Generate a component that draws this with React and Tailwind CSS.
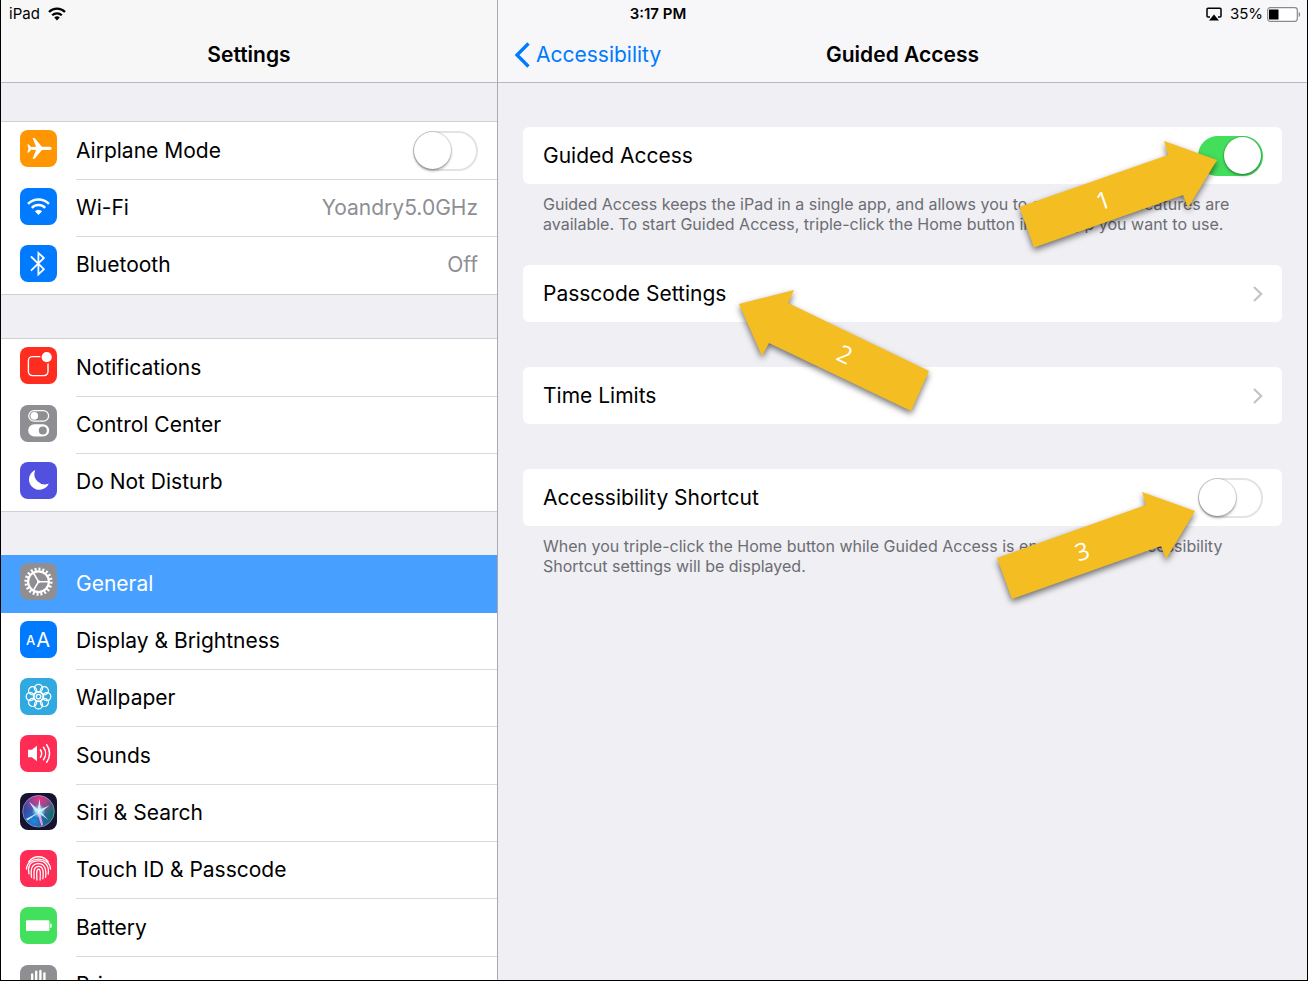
import React from "react";

function Tile({ className, children }) {
  return (
    <svg viewBox="0 0 37 37" aria-hidden="true" className={`mt-2 size-[37px] shrink-0 self-start rounded-lg ${className}`}>
      {children}
    </svg>
  );
}

const line = { fill: "none", stroke: "#fff", strokeLinecap: "round", strokeLinejoin: "round" };

const icons = {
  airplane: (
    <Tile className="bg-[#ff9500]">
      <path
        fill="#fff"
        d="M31.7 18.4c0-1-1.3-1.7-3.2-1.7h-6.6L14.6 8h-2l3.5 8.8-5 .2-2.3-2.6H7.3l1.2 4-1.2 4h1.500l2.3-2.6 5 .2-3.500 8.8h2l7.3-8.7h6.6c1.9 0 3.2-.7 3.2-1.7z"
      />
    </Tile>
  ),
  wifi: (
    <Tile className="bg-[#007aff]">
      <g {...line} strokeLinecap="butt" strokeWidth="2.4">
        <path d="M8 15.8a14.8 14.8 0 0 1 21 0" />
        <path d="M11.8 19.8a9.5 9.5 0 0 1 13.4 0" />
      </g>
      <path fill="#fff" d="M14.9 23.3a5 5 0 0 1 7.2 0l-3.6 3.7z" />
    </Tile>
  ),
  bluetooth: (
    <Tile className="bg-[#007aff]">
      <path {...line} strokeLinejoin="miter" strokeWidth="1.8" d="M11.5 12l12.4 12.2-5.5 5.2V8l5.5 5-12.4 12.2" />
    </Tile>
  ),
  notifications: (
    <Tile className="bg-[#ff2d20]">
      <rect {...line} x="8.4" y="9.6" width="19.6" height="19" rx="4" strokeWidth="1.4" />
      <circle cx="26.7" cy="10.2" r="5.8" fill="#fff" stroke="#ff2d20" strokeWidth="1.4" />
    </Tile>
  ),
  control: (
    <Tile className="bg-[#8e8e93]">
      <rect {...line} x="8.8" y="5.6" width="19.8" height="10.6" rx="5.3" strokeWidth="1.3" />
      <circle cx="14.3" cy="10.9" r="3.8" fill="#fff" />
      <rect x="8.2" y="19.2" width="21" height="12.4" rx="6.2" fill="#fff" />
      <circle cx="22.8" cy="25.4" r="4" fill="#8e8e93" />
    </Tile>
  ),
  moon: (
    <Tile className="bg-[#5150df]">
      <path fill="#fff" d="M15.3 8A10.3 10.3 0 1 0 28.8 21.4 10.2 10.2 0 0 1 15.3 8z" />
    </Tile>
  ),
  gear: (
    <Tile className="bg-[#8e8e93]">
      <g fill="none" stroke="#fff">
        <circle cx="18.5" cy="18.7" r="12.6" strokeWidth="3" pathLength="40" strokeDasharray="1 1" />
        <circle cx="18.5" cy="18.7" r="10.4" strokeWidth="2.2" />
        <path strokeWidth="1.6" d="M18.5 18.7h10.2M18.5 18.7l-5.2-9M18.5 18.7l-5.2 9" />
      </g>
      <circle cx="18.5" cy="18.7" r="1.6" fill="#fff" />
    </Tile>
  ),
  display: (
    <Tile className="bg-[#007aff]">
      <g fill="#fff" fontFamily="Inter, sans-serif">
        <text x="6" y="24" fontSize="13" fontWeight="500">A</text>
        <text x="16.2" y="25.6" fontSize="20">A</text>
      </g>
    </Tile>
  ),
  wallpaper: (
    <Tile className="bg-[#2fa9e0]">
      <g {...line} strokeWidth="1.3">
        {[0, 45, 90, 135, 180, 225, 270, 315].map((a) => (
          <circle key={a} cx="18.5" cy="10.3" r="4" transform={`rotate(${a} 18.5 18.6)`} />
        ))}
        <circle cx="18.5" cy="18.6" r="5" />
        <circle cx="18.5" cy="18.6" r="2.2" />
      </g>
    </Tile>
  ),
  sounds: (
    <Tile className="bg-[#ff2d55]">
      <path fill="#fff" d="M8 14.8h3.8l5.2-4v15.4l-5.2-4H8z" />
      <g {...line} strokeWidth="1.5">
        <path d="M20.4 14.8a6.5 6.5 0 0 1 0 7.4" />
        <path d="M23.5 12.3a10.5 10.5 0 0 1 0 12.4" />
        <path d="M26.7 9.7a15 15 0 0 1 0 17.6" />
      </g>
    </Tile>
  ),
  siri: (
    <Tile className="bg-[#15132f]">
      <defs>
        <linearGradient id="siri-base" x1="0" y1="0.4" x2="1" y2="0.6">
          <stop offset="0" stopColor="#3c3f9e" />
          <stop offset="0.45" stopColor="#3d6fc4" />
          <stop offset="1" stopColor="#0c6a62" />
        </linearGradient>
        <radialGradient id="siri-pink" cx="0.55" cy="0.1" r="0.55">
          <stop offset="0" stopColor="#e8307c" />
          <stop offset="1" stopColor="#e8307c" stopOpacity="0" />
        </radialGradient>
        <radialGradient id="siri-blue" cx="0.35" cy="0.8" r="0.5">
          <stop offset="0" stopColor="#1b8fe0" />
          <stop offset="1" stopColor="#1b3fa0" stopOpacity="0" />
        </radialGradient>
        <radialGradient id="siri-glow">
          <stop offset="0" stopColor="#fff" />
          <stop offset="0.35" stopColor="#bff4ff" stopOpacity="0.8" />
          <stop offset="1" stopColor="#9ff" stopOpacity="0" />
        </radialGradient>
      </defs>
      <circle cx="18.5" cy="18.3" r="15.8" fill="url(#siri-base)" />
      <circle cx="18.5" cy="18.3" r="15.8" fill="url(#siri-pink)" />
      <circle cx="18.5" cy="18.3" r="15.8" fill="url(#siri-blue)" />
      <circle cx="18.5" cy="18.3" r="15.8" fill="none" stroke="#a8a6c8" strokeOpacity="0.75" strokeWidth="0.9" />
      <path
        fill="#d8fbff"
        fillOpacity="0.9"
        d="M20 18.5L6 26l1.6 1.6zM18.5 17L9 8.500l6.500 10.500zM17.500 18l2-12.500 1.500 12.500zM18.500 17l11-4.500-9.500 7.500zM18 19.500l10.500 7.500-8.500-9z"
      />
      <path fill="#f29bd8" d="M17 19l4.500 14 1.500-1.500-3-12.500z" />
      <circle cx="18.8" cy="18.3" r="7" fill="url(#siri-glow)" />
    </Tile>
  ),
  touch: (
    <Tile className="bg-[#ff2d55]">
      <g {...line} strokeWidth="1.3">
        <path d="M8.8 11.6c5-6.500 14.400-6.500 19.400 0" />
        <path d="M6.500 19c.9-13.200 23.100-13.200 24 0" />
        <path d="M9 23.800c-1.400-5.600-.4-12.900 9.500-12.900 7.300 0 11 5.500 9.700 13.300" />
        <path d="M11.500 27.300c-.7-6.800-.8-13.700 7-13.700 6.500 0 8 5.900 7.100 13.700" />
        <path d="M14.100 28.800c-.1-6-1.100-12.500 4.400-12.500s4.900 6.500 4.400 12.500" />
        <path d="M16.900 30c0-4.500-.9-10.800 1.600-10.800s1.800 6.300 1.600 10.800" />
      </g>
    </Tile>
  ),
  battery: (
    <Tile className="bg-[#43e05e]">
      <rect x="6" y="13.3" width="23.4" height="10.6" rx="1" fill="#fff" />
      <path fill="#fff" d="M30.2 16.2c2.2.4 2.2 4.400 0 4.800z" />
    </Tile>
  ),
  privacy: (
    <Tile className="bg-[#8e8e93]">
      <path {...line} strokeWidth="2.4" d="M12.200 20V9.500M16.200 18V6.800M20.400 18V6M24.400 20V8.500" />
      <path fill="#fff" d="M11 16h14.600v9c0 3-2 6-6.600 6-4 0-5.500-2-8-6z" />
    </Tile>
  ),
};

function Switch({ label, on }) {
  return (
    <input
      type="checkbox"
      role="switch"
      aria-label={label}
      defaultChecked={on}
      className="flex h-10 w-[65px] shrink-0 appearance-none items-center rounded-full border-2 border-[#e3e3e5] bg-white before:-ml-px before:size-[37px] before:shrink-0 before:rounded-full before:bg-white before:shadow-[0_0_0_1px_rgba(0,0,0,0.12),0_2px_3px_rgba(0,0,0,0.3)] before:content-[''] checked:border-[#43df5c] checked:bg-[#43df5c] checked:before:ml-6"
    />
  );
}

function Row({ icon, label, value, toggle, active }) {
  const body = (
    <>
      {icons[icon]}
      <span
        className={`flex h-full flex-1 items-center justify-between border-b pr-[19px] ${
          active ? "border-transparent text-white" : "border-[#dadade] group-last/row:border-transparent"
        }`}
      >
        {label}
        {value && <span className="text-[#8e8e93]">{value}</span>}
        {toggle && <Switch label={label} />}
      </span>
    </>
  );
  const box = "flex h-full w-full items-center gap-[19px] pl-[19px] text-left";
  return (
    <li className={`group/row h-[57px] nth-[3n+1]:h-[58px] ${active ? "-mt-px bg-[#479fff]" : ""}`}>
      {toggle ? <div className={box}>{body}</div> : <button type="button" className={box}>{body}</button>}
    </li>
  );
}

const groups = [
  [
    { icon: "airplane", label: "Airplane Mode", toggle: true },
    { icon: "wifi", label: "Wi-Fi", value: "Yoandry5.0GHz" },
    { icon: "bluetooth", label: "Bluetooth", value: "Off" },
  ],
  [
    { icon: "notifications", label: "Notifications" },
    { icon: "control", label: "Control Center" },
    { icon: "moon", label: "Do Not Disturb" },
  ],
  [
    { icon: "gear", label: "General", active: true },
    { icon: "display", label: "Display & Brightness" },
    { icon: "wallpaper", label: "Wallpaper" },
    { icon: "sounds", label: "Sounds" },
    { icon: "siri", label: "Siri & Search" },
    { icon: "touch", label: "Touch ID & Passcode" },
    { icon: "battery", label: "Battery" },
    { icon: "privacy", label: "Privacy" },
  ],
];

function StatusBar() {
  return (
    <div className="z-10 col-start-1 row-start-1 grid h-7 grid-cols-[1fr_auto_1fr] items-center self-start pl-2 text-[15px]">
      <div className="flex items-center gap-2">
        iPad
        <svg viewBox="0 0 18 14" className="h-3.5 w-[18px]" aria-label="Wi-Fi">
          <g fill="none" stroke="#000" strokeWidth="2.3">
            <path d="M1 5a11.300 11.300 0 0 1 16 0" />
            <path d="M4.200 8.300a6.800 6.800 0 0 1 9.600 0" />
          </g>
          <path d="M6.200 10.600a4 4 0 0 1 5.600 0L9 13.500z" />
        </svg>
      </div>
      <div className="font-semibold">3:17 PM</div>
      <div className="flex items-center justify-end gap-1 pr-1.5">
        <svg viewBox="0 0 16 14" className="mr-1 h-3.5 w-4" aria-label="AirPlay">
          <path
            d="M4 10H2a1 1 0 0 1-1-1V2.300a1 1 0 0 1 1-1h12a1 1 0 0 1 1 1V9a1 1 0 0 1-1 1h-2"
            fill="none"
            stroke="#000"
            strokeWidth="1.5"
          />
          <path d="M8 7.500l5 6H3z" />
        </svg>
        35%
        <svg viewBox="0 0 34 15" className="h-[15px] w-[34px]" aria-label="Battery 35%">
          <rect x="0.7" y="0.7" width="29.6" height="13.6" rx="2.5" fill="#fff" stroke="#8a8a8d" strokeWidth="1.2" />
          <rect x="2" y="2.5" width="9.5" height="10" rx="0.5" />
          <path d="M31.700 5c1.900.5 1.900 4.500 0 5z" fill="#8a8a8d" />
        </svg>
      </div>
    </div>
  );
}

function Card({ label, children, link }) {
  const cls = "flex h-[57px] w-full items-center justify-between rounded-md bg-white pr-[19px] pl-5 text-left";
  if (!link) return <div className={cls}>{label}{children}</div>;
  return (
    <button type="button" className={cls}>
      {label}
      <svg viewBox="0 0 10 18" className="h-[18px] w-2.5" aria-hidden="true">
        <path d="M1 2l7.200 7L1 16" fill="none" stroke="#c2c2c7" strokeWidth="2.2" />
      </svg>
    </button>
  );
}

const arrows = [
  { n: 1, x: 1103, y: 200, turn: -19, d: "M1019.500 207L1034 247.500 1183 195 1188 208 1217 160 1164 141 1168 155z" },
  { n: 2, x: 845, y: 354, turn: 25, d: "M739 304L794 290 788 303 929 371 911 411 769 343 762 356z" },
  { n: 3, x: 1082, y: 551, turn: -19, d: "M997 558L1012 599 1161 546 1166 559 1195 511 1142 492 1146 505z" },
];

function Arrows() {
  return (
    <svg
      width="1308"
      height="981"
      viewBox="0 0 1308 981"
      className="pointer-events-none absolute top-0 -left-px z-20 max-w-none"
    >
      {arrows.map((a) => (
        <g key={a.n}>
          <path d={a.d} fill="#f4bd22" className="drop-shadow-[0_3px_3px_rgba(0,0,0,0.55)]" />
          <text
            x={a.x}
            y={a.y + 9}
            textAnchor="middle"
            transform={`rotate(${a.turn} ${a.x} ${a.y})`}
            fill="#fff"
            fontSize="24"
            fontFamily="'Open Sans', 'Noto Sans', sans-serif"
          >
            {a.n}
          </text>
        </g>
      ))}
    </svg>
  );
}

export default function App() {
  return (
    <div className="relative grid h-screen grid-cols-1 grid-rows-[minmax(0,1fr)] overflow-hidden border-x border-b border-black bg-[#efeff4] font-['Inter',sans-serif] text-[21px] leading-6 text-black">
      <StatusBar />
      <div className="col-start-1 row-start-1 flex min-h-0">
        <aside className="w-[497px] shrink-0 overflow-hidden border-r border-[#a9a9af]">
          <header className="flex h-[83px] items-end justify-center border-b border-[#b9b9bf] bg-[#f7f7f8] pb-[15px]">
            <h1 className="font-semibold">Settings</h1>
          </header>
          <nav aria-label="Settings" className="flex flex-col gap-[43px] pt-[38px]">
            {groups.map((rows, i) => (
              <ul key={i} className="border-y border-[#cfcfd4] bg-white">
                {rows.map((r) => (
                  <Row key={r.label} {...r} />
                ))}
              </ul>
            ))}
          </nav>
        </aside>
        <main className="flex min-w-0 flex-1 flex-col">
          <header className="grid h-[83px] shrink-0 grid-cols-[1fr_auto_1fr] items-end border-b border-[#b9b9bf] bg-[#f7f7f9] px-4 pb-[15px]">
            <a href="#accessibility" className="flex h-6 items-center gap-1.5 text-[#007aff]">
              <svg viewBox="0 0 16 26" className="h-[26px] w-4" aria-hidden="true">
                <path d="M14.500 1.500L3 13l11.500 11.500" fill="none" stroke="#007aff" strokeWidth="3.3" />
              </svg>
              Accessibility
            </a>
            <h2 className="font-semibold">Guided Access</h2>
          </header>
          <div className="flex flex-col px-[25px] pt-11">
            <Card label="Guided Access">
              <Switch label="Guided Access" on />
            </Card>
            <p className="px-5 pt-2.5 pb-[31px] text-[16px] leading-5 text-[#6d6d72]">
              Guided Access keeps the iPad in a single app, and allows you to control which features are available. To
              start Guided Access, triple-click the Home button in the app you want to use.
            </p>
            <div className="flex flex-col gap-[45px]">
              <Card label="Passcode Settings" link />
              <Card label="Time Limits" link />
              <Card label="Accessibility Shortcut">
                <Switch label="Accessibility Shortcut" />
              </Card>
            </div>
            <p className="px-5 pt-2.5 text-[16px] leading-5 text-[#6d6d72]">
              When you triple-click the Home button while Guided Access is enabled, your Accessibility Shortcut settings
              will be displayed.
            </p>
          </div>
        </main>
      </div>
      <Arrows />
    </div>
  );
}
